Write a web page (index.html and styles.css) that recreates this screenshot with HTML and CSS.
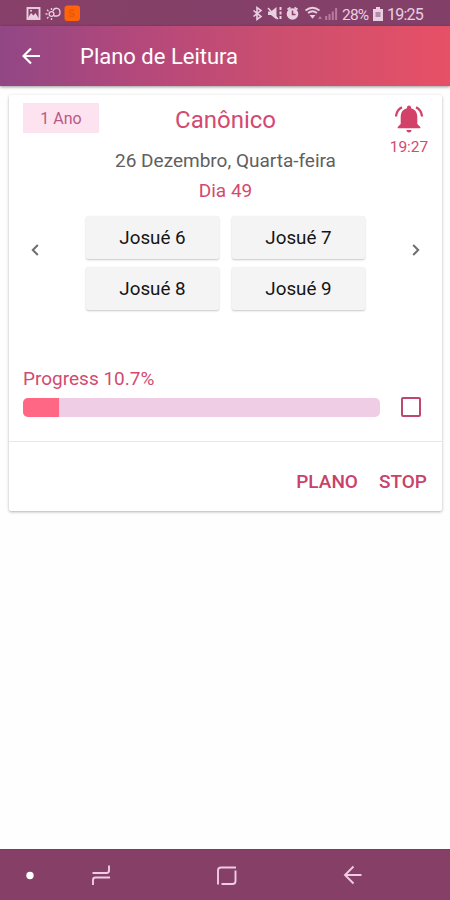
FILE: index.html
```html
<!DOCTYPE html>
<html lang="pt">
<head>
<meta charset="utf-8">
<title>Plano de Leitura</title>
<link rel="stylesheet" href="styles.css">
</head>
<body>
<div class="status">
  <svg class="status-left" width="54" height="18" viewBox="26 5 54 18">
    <rect x="27.500" y="8" width="12" height="11" fill="none" stroke="#e9cfe2" stroke-width="1.900"/>
    <path d="M28 18l3-5 2.500 2.500 2-2.500 3 5z" fill="#e9cfe2"/><circle cx="31" cy="10.800" r="1" fill="#e9cfe2"/>
    <g fill="none" stroke="#e9cfe2" stroke-width="1.300"><circle cx="51.500" cy="14" r="2.400"/><path d="M51.500 8v2M51.500 18v2M45.500 14h2M47 9.800l1.500 1.500M47 18.500l1.500-1.500"/><path d="M53 11q1-3 4-2.700t3 4-3 3.700h-3"/></g>
    <rect x="64.500" y="5.500" width="15.500" height="15.500" rx="3" fill="#ff6408"/>
    <path d="M74 10.500q-4-1-4.500 1t3 2 .5 3l-3.500-.5" fill="none" stroke="#e8550c" stroke-width="1.300"/>
  </svg>
  <div class="status-right">
    <svg width="88" height="18" viewBox="252 5 88 18">
      <g fill="none" stroke="#e9cfe2" stroke-width="1.600">
        <path d="M254.500 10.500l7.500 6-4 3V7.500l4 3-7.500 6"/>
        <path d="M269 8l10 11" stroke-width="1.500"/>
        <path d="M281.500 7v13" stroke-width="2" stroke-dasharray="3 1.500"/>
        <path d="M288.500 9.500l3-2M298.500 9.500l-3-2" stroke-width="2"/>
        <path d="M306.500 10.500q7-5.500 14 0M309 13q4.500-3.500 9 0" stroke-width="1.800"/>
      </g>
      <path d="M269 11.500h3l5.500-4.500v12.500l-5.500-4.500h-3z" fill="#e9cfe2"/>
      <circle cx="293.500" cy="14" r="5.800" fill="#e9cfe2"/><path d="M293.500 10.500v4h3" fill="none" stroke="#864067" stroke-width="1.500"/>
      <path d="M310.500 15h6l-3 3.800z" fill="#e9cfe2"/><path d="M319 19l2-3 2 3z" fill="#b77ba1"/>
      <path d="M327.200 16v4M330.500 14v6M333.800 11.500v8.500M337.100 8v12" stroke="#b77ba1" stroke-width="2"/>
    </svg>
    <span class="percent">28%</span>
    <svg width="10" height="14" viewBox="0 0 10 14"><path d="M3 0h4v2h3v12H0V2h3z" fill="#e9cfe2"/><path d="M2.500 5h5v5h-5z" fill="#b78aab"/></svg>
    <span class="clock">19:25</span>
  </div>
</div>
<header class="bar">
  <svg width="20" height="18" viewBox="0 0 20 18"><path d="M18 9H2M9 1.500L1.500 9 9 16.500" fill="none" stroke="#fff" stroke-width="2.200"/></svg>
  <h1>Plano de Leitura</h1>
</header>
<main>
  <section class="card">
    <div class="head">
      <span class="tag">1 Ano</span>
      <h2>Canônico</h2>
      <div class="alarm">
        <svg width="28" height="28" viewBox="0 0 28 28"><path d="M14 .5c1.200 0 2 .9 2 2v.8c4.200 1 6.300 4.400 6.300 8.700v7l3 3v1.200H2.700V22l3-3v-7c0-4.300 2.100-7.700 6.300-8.700v-.8c0-1.100.8-2 2-2zM11.300 25h5.400q-.6 2.500-2.700 2.500T11.300 25z" fill="#d34169"/><path d="M7 2.200Q1.500 5 1 11.500M21 2.200q5.500 2.800 6 9.300" fill="none" stroke="#d34169" stroke-width="2.300"/></svg>
        <span>19:27</span>
      </div>
    </div>
    <p class="date">26 Dezembro, Quarta-feira</p>
    <p class="day">Dia 49</p>
    <div class="reader">
      <svg width="8" height="12" viewBox="0 0 8 12"><path d="M6.800 1L1.800 6l5 5" fill="none" stroke="#6e6e6e" stroke-width="2"/></svg>
      <div class="chapters">
        <button>Josué 6</button><button>Josué 7</button>
        <button>Josué 8</button><button>Josué 9</button>
      </div>
      <svg width="8" height="12" viewBox="0 0 8 12"><path d="M1.200 1l5 5-5 5" fill="none" stroke="#6e6e6e" stroke-width="2"/></svg>
    </div>
    <p class="label">Progress 10.7%</p>
    <div class="progress">
      <div class="track"><div class="fill"></div></div>
      <span class="check"></span>
    </div>
    <div class="actions"><span class="plan">PLANO</span><span class="stop">STOP</span></div>
  </section>
</main>
<nav>
  <svg width="450" height="50" viewBox="0 850 450 50">
    <circle cx="30" cy="875.500" r="3.700" fill="#fff"/>
    <g fill="none" stroke="#efcce4" stroke-width="1.900">
      <path d="M92.500 873h14q2.500 0 2.500-2.500v-5M110 877.500H95.500q-2.500 0-2.500 2.500v5"/>
      <path d="M236 867.500h-15q-3 0-3 3v14M221.500 884h11q3 0 3-3v-10.500"/>
      <path d="M361.500 875H346M353.500 866.500l-8.500 8.500 8.500 8.500"/>
    </g>
  </svg>
</nav>
</body>
</html>
```
FILE: styles.css
```css
* { box-sizing: border-box; }
body {
  margin: 0;
  height: 900px;
  display: flex;
  flex-direction: column;
  background: #fefefe;
  font-family: Roboto, sans-serif;
  color: #d34a71;
}
h1, h2, p { margin: 0; font-weight: 400; }
svg { display: block; flex: none; }
.status {
  height: 26px;
  padding: 2px 26px 0;
  display: flex;
  align-items: center;
  justify-content: space-between;
  background: linear-gradient(90deg, #874069, #824068);
  color: #e9cfe2;
}
.status-left { width: 54px; }
.status-right { display: flex; align-items: center; font-size: 16px; line-height: 18px; white-space: nowrap; }
.percent { width: 27px; margin: 1px 4px 0 3px; font-size: 15.500px; letter-spacing: -0.8px; }
.clock { width: 37px; margin: 1px 0 0 4px; letter-spacing: -0.8px; }
.bar {
  height: 60px;
  padding-left: 22px;
  display: flex;
  align-items: center;
  gap: 38px;
  background: linear-gradient(90deg, #914785 0%, #b3487b 30%, #ce4f6e 65%, #e75066 100%);
  box-shadow: 0 1px 3px rgba(0, 0, 0, 0.4);
  color: #fff;
}
h1 { font-size: 22px; line-height: 30px; padding-top: 2px; }
main { flex: 1; padding: 9px 8px 0 9px; }
.card {
  height: 416px;
  background: #fff;
  border-radius: 2px;
  box-shadow: 0 1px 3px rgba(0, 0, 0, 0.3);
  text-align: center;
}
.head {
  height: 51px;
  padding: 8px 14px 0;
  display: grid;
  grid-template-columns: 76px 1fr 76px;
}
.tag { height: 30px; background: #fde3f0; color: #b95a86; font-size: 16px; line-height: 31px; }
h2 { font-size: 24px; line-height: 34px; }
.alarm { display: flex; flex-direction: column; align-items: center; width: 40px; justify-self: end; margin-right: -1px; padding-top: 2px; font-size: 15.500px; line-height: 18px; }
.alarm span { margin-top: 5px; }
.date { color: #606060; font-size: 19px; line-height: 30px; height: 30px; }
.day { font-size: 19px; line-height: 30px; height: 30px; }
.reader { height: 96px; margin-top: 10px; padding: 0 22px; display: flex; justify-content: space-between; }
.reader > svg { margin-top: 28px; }
.chapters { display: grid; grid-template-columns: 133px 133px; grid-template-rows: 43px 43px; gap: 8px 13px; }
button { border: 0; padding: 0; border-radius: 2px; background: #f4f4f4; color: #151515; font: 18.800px/44px Roboto, sans-serif; box-shadow: 0 1px 2px rgba(0, 0, 0, 0.22); }
.label { margin: 55px 0 0 14px; text-align: left; font-size: 19px; line-height: 24px; }
.progress { height: 20px; margin-top: 6px; padding: 0 21px 0 14px; display: flex; align-items: center; justify-content: space-between; }
.track { width: 357px; height: 19px; border-radius: 5px; overflow: hidden; background: #efcde4; }
.fill { width: 10%; height: 100%; background: #ff6784; }
.check { width: 20px; height: 20px; border: 2px solid #be476e; border-radius: 2px; }
.actions { height: 69px; margin-top: 24px; padding: 10px 15px 0 0; border-top: 1px solid #e8e8e8; display: flex; align-items: center; justify-content: flex-end; gap: 21px; color: #ca416a; font-size: 19px; font-weight: 500; }
nav { height: 51px; border-top: 1px solid #76405d; background: #864067; }
```
